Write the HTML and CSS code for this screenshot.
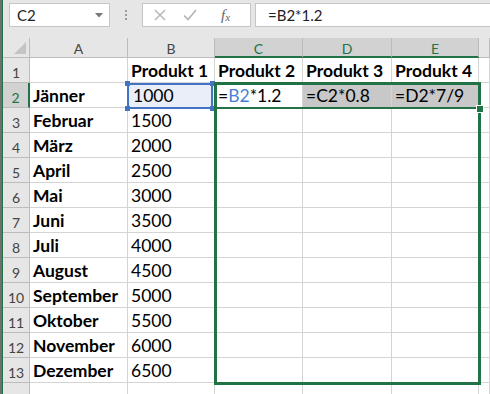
FILE: index.html
```html
<!DOCTYPE html>
<html lang="de">
<head>
  <meta charset="UTF-8" />
  <title>Excel</title>
  <link rel="stylesheet" href="styles.css">
</head>
<body>
  <div class="window">
    <div class="edge"></div>
    <div class="main">

      <!-- Formula bar -->
      <div class="formula-bar">
        <div class="name-box">
          <span>C2</span>
          <svg class="caret" width="8" height="5" viewBox="0 0 8 5"><path d="M0 0 H8 L4 4.5 Z" fill="#777"/></svg>
        </div>
        <div class="grip"><i></i><i></i><i></i></div>
        <div class="buttons">
          <svg class="btn-x" width="12" height="12" viewBox="0 0 12 12"><path d="M1 1 L11 11 M11 1 L1 11" stroke="#b3b3b3" stroke-width="1.4" fill="none"/></svg>
          <svg class="btn-ok" width="14" height="12" viewBox="0 0 14 12"><path d="M1 6.5 L5 10.5 L13 1" stroke="#b3b3b3" stroke-width="1.6" fill="none"/></svg>
          <span class="fx">f<sub>x</sub></span>
        </div>
        <div class="formula-input">=B2*1.2</div>
      </div>

      <!-- Sheet -->
      <div class="sheet">
        <div class="grid">
          <div class="hd corner"><svg width="12" height="12" viewBox="0 0 12 12"><path d="M12 0 V12 H0 Z" fill="#c4c4c4"/></svg></div>
          <div class="hd col">A</div>
          <div class="hd col">B</div>
          <div class="hd col sel">C</div>
          <div class="hd col sel">D</div>
          <div class="hd col sel">E</div>
          <div class="hd col"></div>

          <div class="hd row">1</div>
          <div class="c"></div>
          <div class="c b">Produkt 1</div>
          <div class="c b">Produkt 2</div>
          <div class="c b">Produkt 3</div>
          <div class="c b">Produkt 4</div>
          <div class="c"></div>

          <div class="hd row sel">2</div>
          <div class="c b">Jänner</div>
          <div class="c ref">1000</div>
          <div class="c">=<span class="blue">B2</span>*1.2</div>
          <div class="c grey">=C2*0.8</div>
          <div class="c grey">=D2*7/9</div>
          <div class="c"></div>

          <div class="hd row">3</div>
          <div class="c b">Februar</div>
          <div class="c">1500</div>
          <div class="c"></div><div class="c"></div><div class="c"></div><div class="c"></div>

          <div class="hd row">4</div>
          <div class="c b">März</div>
          <div class="c">2000</div>
          <div class="c"></div><div class="c"></div><div class="c"></div><div class="c"></div>

          <div class="hd row">5</div>
          <div class="c b">April</div>
          <div class="c">2500</div>
          <div class="c"></div><div class="c"></div><div class="c"></div><div class="c"></div>

          <div class="hd row">6</div>
          <div class="c b">Mai</div>
          <div class="c">3000</div>
          <div class="c"></div><div class="c"></div><div class="c"></div><div class="c"></div>

          <div class="hd row">7</div>
          <div class="c b">Juni</div>
          <div class="c">3500</div>
          <div class="c"></div><div class="c"></div><div class="c"></div><div class="c"></div>

          <div class="hd row">8</div>
          <div class="c b">Juli</div>
          <div class="c">4000</div>
          <div class="c"></div><div class="c"></div><div class="c"></div><div class="c"></div>

          <div class="hd row">9</div>
          <div class="c b">August</div>
          <div class="c">4500</div>
          <div class="c"></div><div class="c"></div><div class="c"></div><div class="c"></div>

          <div class="hd row">10</div>
          <div class="c b">September</div>
          <div class="c">5000</div>
          <div class="c"></div><div class="c"></div><div class="c"></div><div class="c"></div>

          <div class="hd row">11</div>
          <div class="c b">Oktober</div>
          <div class="c">5500</div>
          <div class="c"></div><div class="c"></div><div class="c"></div><div class="c"></div>

          <div class="hd row">12</div>
          <div class="c b">November</div>
          <div class="c">6000</div>
          <div class="c"></div><div class="c"></div><div class="c"></div><div class="c"></div>

          <div class="hd row">13</div>
          <div class="c b">Dezember</div>
          <div class="c">6500</div>
          <div class="c"></div><div class="c"></div><div class="c"></div><div class="c"></div>

          <div class="hd row"></div>
          <div class="c"></div><div class="c"></div><div class="c"></div><div class="c"></div><div class="c"></div><div class="c"></div>
        </div>

        <!-- selection overlays -->
        <div class="ref-box">
          <i class="h tl"></i><i class="h tr"></i><i class="h bl"></i><i class="h br"></i>
        </div>
        <div class="range-box"></div>
        <div class="row-line"></div>
        <div class="fill-handle"></div>
      </div>
    </div>
  </div>
</body>
</html>
```

FILE: styles.css
```css
html, body {
  margin: 0;
  padding: 0;
  background: #fff;
  overflow: hidden;
}

body {
  font-family: Lato, "Liberation Sans", sans-serif;
  color: #000;
}

.window {
  display: flex;
  height: 394px;
}

.edge {
  width: 2px;
  background: #6e6e6e;
  border-right: 1px solid #217346;
}

.main {
  flex: 1;
  min-width: 0;
}

/* formula bar */
.formula-bar {
  height: 38px;
  background: #e6e6e6;
  display: flex;
  align-items: flex-start;
  padding-top: 3px;
  box-sizing: border-box;
}

.name-box {
  margin-left: 6px;
  width: 101px;
  height: 24px;
  background: #fff;
  border: 1px solid #c6c6c6;
  box-sizing: border-box;
  display: flex;
  align-items: center;
  justify-content: space-between;
  padding: 0 6px 0 7px;
  font-size: 15px;
  color: #222;
}

.grip {
  width: 32px;
  height: 24px;
  display: flex;
  flex-direction: column;
  align-items: center;
  justify-content: center;
  gap: 2px;
}

.grip i {
  width: 2px;
  height: 2px;
  background: #9a9a9a;
}

.buttons {
  width: 109px;
  height: 24px;
  background: #fff;
  border: 1px solid #c6c6c6;
  box-sizing: border-box;
  display: flex;
  align-items: center;
  padding-left: 11px;
}

.btn-ok {
  margin-left: 17px;
}

.fx {
  margin-left: 24px;
  font-family: "Liberation Serif", serif;
  font-style: italic;
  font-size: 15px;
  color: #666;
}

.fx sub {
  font-size: 11px;
  vertical-align: -1px;
}

.formula-input {
  flex: 1;
  margin-left: 4px;
  height: 24px;
  background: #fff;
  border: 1px solid #c6c6c6;
  border-right: none;
  box-sizing: border-box;
  padding-left: 12px;
  font-size: 15px;
  line-height: 22px;
  color: #222;
}

/* sheet */
.sheet {
  position: relative;
}

.grid {
  display: grid;
  grid-template-columns: 27px 98px 87px 88px 89px 87px 1fr;
  grid-template-rows: 20px repeat(14, 25px);
}

.grid > div {
  box-sizing: border-box;
  border-right: 1px solid #d4d4d4;
  border-bottom: 1px solid #d4d4d4;
  overflow: hidden;
  white-space: nowrap;
}

.hd {
  background: #e6e6e6;
  color: #444;
  font-size: 14px;
  display: flex;
  align-items: center;
  justify-content: center;
}

.grid > .hd {
  border-color: #bcbcbc;
}

.corner {
  justify-content: flex-end;
  align-items: flex-end;
  padding: 0 3px 3px 0;
}

.hd.col {
  padding-top: 2px;
}

.hd.row {
  padding-top: 4px;
}

.grid > .hd.col.sel {
  background: #d2d2d2;
  color: #217346;
  border-bottom: 2px solid #217346;
}

.grid > .hd.row.sel {
  background: #d2d2d2;
  color: #217346;
  border-right: 2px solid #217346;
}

.c {
  font-size: 17.5px;
  line-height: 24px;
  padding-left: 3px;
  padding-top: 1px;
}

.c.b {
  font-weight: bold;
}

.c.ref {
  background: #e9eef8;
  padding-left: 5px;
}

.c.grey {
  background: #c8c8c8;
}

.blue {
  color: #4a7fd4;
}

/* overlays */
.ref-box {
  position: absolute;
  left: 124px;
  top: 45px;
  width: 86px;
  height: 26px;
  border: 2px solid #4472c4;
  box-sizing: border-box;
}

.ref-box .h {
  position: absolute;
  width: 5px;
  height: 5px;
  background: #4472c4;
}

.ref-box .tl { left: -4px; top: -4px; }
.ref-box .tr { right: -4px; top: -4px; }
.ref-box .bl { left: -4px; bottom: -4px; }
.ref-box .br { right: -4px; bottom: -4px; }

.range-box {
  position: absolute;
  left: 211px;
  top: 44px;
  width: 267px;
  height: 303px;
  border: 3px solid #217346;
  box-sizing: border-box;
}

.row-line {
  position: absolute;
  left: 211px;
  top: 69px;
  width: 267px;
  height: 2px;
  background: #217346;
}

.fill-handle {
  position: absolute;
  left: 473px;
  top: 67px;
  width: 6px;
  height: 6px;
  background: #217346;
  border: 1px solid #fff;
}
```
